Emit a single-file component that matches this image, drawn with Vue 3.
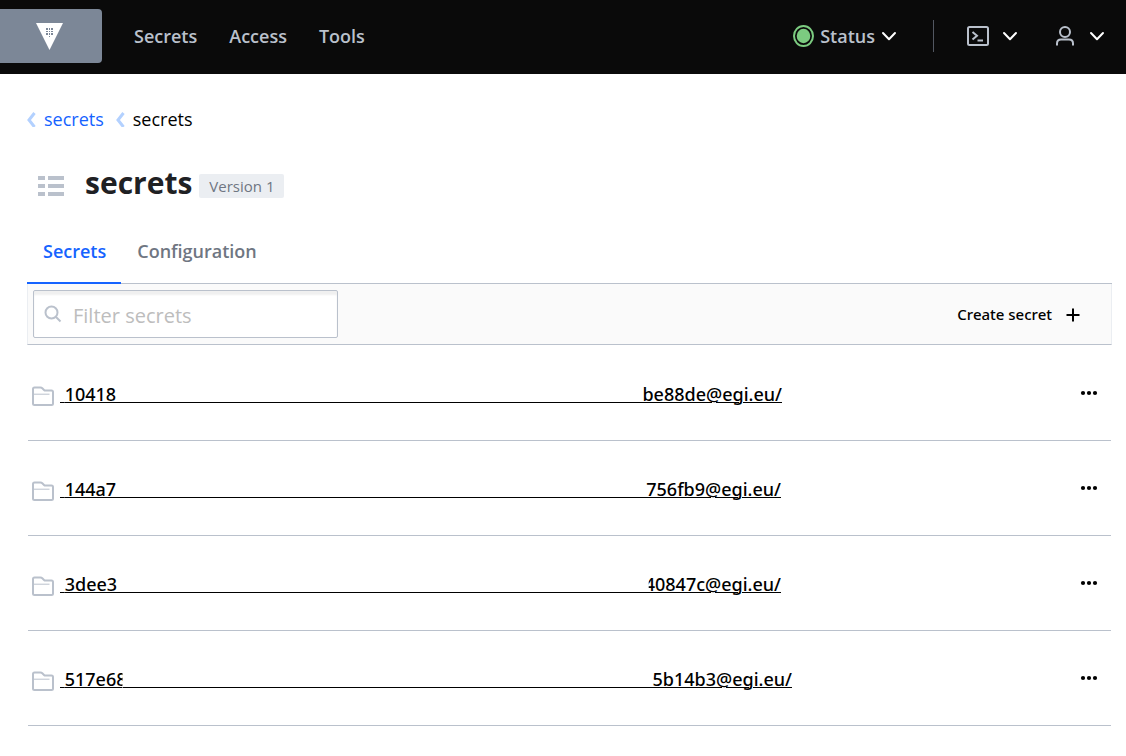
<script setup>
import { ref } from 'vue'

const filter = ref('')
const rows = [
  { start: '10418', end: 'be88de@egi.eu/', width: 722 },
  { start: '144a7', end: '756fb9@egi.eu/', width: 721 },
  { start: '3dee3', end: '40847c@egi.eu/', width: 721, cutEnd: true },
  { start: '517e68', end: '5b14b3@egi.eu/', width: 732, cutStart: true }
]
</script>

<template>
  <div class="page">
    <header class="topbar">
      <a class="brand" href="#" aria-label="Home">
        <svg width="28" height="28" viewBox="0 0 28 28">
          <path d="M0 1H27L13.5 28Z" fill="#fff" />
          <path
            fill="#7c8797"
            d="M10 6h2v2h-2zM13 6h1v2h-1zM15 6h2v2h-2zM10 9h2v1h-2zM13 9h1v1h-1zM15 9h2v1h-2zM10 11h2v2h-2zM13 11h1v2h-1zM15 11h2v2h-2zM13 14h1v1h-1z"
          />
        </svg>
      </a>
      <nav class="nav">
        <a href="#">Secrets</a>
        <a href="#">Access</a>
        <a href="#">Tools</a>
      </nav>
      <div class="tools">
        <button class="tool status">
          <svg width="22" height="24" viewBox="0 0 22 24">
            <ellipse cx="10.5" cy="12" rx="9.5" ry="10" fill="none" stroke="#7ccb80" stroke-width="2" />
            <ellipse cx="10.5" cy="12" rx="6.8" ry="7.2" fill="#7ccb80" />
          </svg>
          <span>Status</span>
          <svg class="chev" width="16" height="10" viewBox="0 0 16 10"><path d="M2 2L8 8.3L14 2" /></svg>
        </button>
        <span class="divider"></span>
        <button class="tool console" aria-label="Console">
          <svg class="line" width="24" height="22" viewBox="0 0 24 22">
            <rect x="2" y="2" width="20" height="18" rx="1.5" />
            <path d="M6.5 7L11 10.8L6.5 14.6M11.5 15.5H17" />
          </svg>
          <svg class="chev" width="16" height="10" viewBox="0 0 16 10"><path d="M2 2L8 8.3L14 2" /></svg>
        </button>
        <button class="tool user" aria-label="User">
          <svg class="line" width="20" height="22" viewBox="0 0 20 22">
            <circle cx="10" cy="7" r="5" />
            <path d="M2 20.5V18.5Q2 14.5 6 14.5H14Q18 14.5 18 18.5V20.5" />
          </svg>
          <svg class="chev" width="16" height="10" viewBox="0 0 16 10"><path d="M2 2L8 8.3L14 2" /></svg>
        </button>
      </div>
    </header>

    <main class="content">
      <nav class="crumbs" aria-label="Breadcrumb">
        <svg width="9" height="16" viewBox="0 0 9 16"><path d="M7.5 2L2 9L7.5 16" /></svg>
        <a href="#">secrets</a>
        <svg width="9" height="16" viewBox="0 0 9 16"><path d="M7.5 2L2 9L7.5 16" /></svg>
        <span>secrets</span>
      </nav>

      <div class="heading">
        <svg width="27" height="22" viewBox="0 0 27 22" fill="#bac1cc">
          <path d="M0 2h7v4H0zM10 2h16v4H10zM0 10h7v4H0zM10 10h16v4H10zM0 18h7v4H0zM10 18h16v4H10z" />
        </svg>
        <h1>secrets</h1>
        <span class="tag">Version 1</span>
      </div>

      <nav class="tabs">
        <a class="active" href="#">Secrets</a>
        <a href="#">Configuration</a>
      </nav>

      <div class="toolbar">
        <label class="search">
          <svg width="18" height="18" viewBox="0 0 18 18"><circle cx="7.5" cy="7.5" r="6" /><path d="M12 12L16.5 16.5" /></svg>
          <input v-model="filter" type="text" placeholder="Filter secrets" aria-label="Filter secrets">
        </label>
        <button class="create">
          <span>Create secret</span>
          <svg width="14" height="16" viewBox="0 0 14 16"><path d="M7 2.5V15.5M0.5 9H13.5" /></svg>
        </button>
      </div>

      <ul class="list">
        <li v-for="row in rows" :key="row.start">
          <svg class="folder" width="24" height="22" viewBox="0 0 24 22">
            <path d="M2 18.5V4Q2 2.5 3.5 2.5H9.5Q10.5 2.5 11.3 3.3L13 5Q13.6 5.6 14.5 5.6H20.5Q22 5.6 22 7.1V18.5Q22 20 20.5 20H3.5Q2 20 2 18.5Z" />
            <path class="thin" d="M2 9.2H18.5" />
          </svg>
          <a class="name" href="#" :style="{ width: row.width + 'px' }">
            <span class="start" :class="{ cutstart: row.cutStart }">{{ row.start }}</span>
            <span class="rule"></span>
            <span :class="{ cutend: row.cutEnd }">{{ row.end }}</span>
          </a>
          <button class="more" aria-label="More actions">
            <svg width="18" height="6" viewBox="0 0 18 6"><circle cx="3" cy="3" r="2.1" /><circle cx="9" cy="3" r="2.1" /><circle cx="15" cy="3" r="2.1" /></svg>
          </button>
        </li>
      </ul>
    </main>
  </div>
</template>

<style>
body {
  margin: 0;
  background: #fff;
}
</style>

<style scoped>
.page {
  font-family: "Open Sans", "Noto Sans", sans-serif;
  color: #000;
}
a {
  color: inherit;
  text-decoration: none;
}
button {
  border: 0;
  padding: 0;
  background: none;
  font: inherit;
  color: inherit;
}
svg {
  display: block;
  flex: none;
}
.topbar {
  display: flex;
  align-items: center;
  height: 74px;
  box-sizing: border-box;
  padding: 0 21px 2px 0;
  background: #0a0a0a;
  color: #bac1cc;
  font-size: 18px;
  font-weight: 600;
}
.brand {
  display: flex;
  align-items: center;
  box-sizing: border-box;
  width: 102px;
  height: 54px;
  padding-left: 36px;
  border-radius: 0 4px 4px 0;
  background: #7c8797;
}
.nav {
  display: flex;
  gap: 32px;
  margin-left: 32px;
}
.tools {
  display: flex;
  align-items: center;
  margin-left: auto;
}
.tool {
  display: flex;
  align-items: center;
}
.status {
  gap: 5px;
}
.chev {
  fill: none;
  stroke: #fff;
  stroke-width: 2;
  stroke-linecap: round;
  stroke-linejoin: round;
}
.status .chev {
  margin-left: 1px;
}
.divider {
  width: 1px;
  height: 32px;
  margin: 0 32px 0 36px;
  background: #525761;
}
.line {
  fill: none;
  stroke: #bac1cc;
  stroke-width: 2;
}
.console {
  gap: 12px;
}
.user {
  gap: 14px;
  margin-left: 37px;
}
.content {
  padding: 31px 14px 0 27px;
}
.crumbs {
  display: flex;
  align-items: center;
  height: 28px;
  font-size: 18px;
}
.crumbs svg {
  fill: none;
  stroke: #b3d1ff;
  stroke-width: 3;
  margin-right: 8px;
}
.crumbs a {
  margin-right: 12px;
  color: #1563ff;
}
.heading {
  display: flex;
  align-items: center;
  height: 44px;
  margin-top: 30px;
  padding-left: 11px;
}
h1 {
  margin: 0 7px 4px 20px;
  font-size: 30px;
  line-height: 40px;
  font-weight: 700;
  color: #1f2124;
}
.tag {
  padding: 0 10px;
  margin-top: 2px;
  border-radius: 2px;
  background: #ebeef2;
  color: #6f7682;
  font-size: 15px;
  line-height: 24px;
}
.tabs {
  display: flex;
  height: 76px;
  border-bottom: 1px solid #bac1cc;
  font-size: 18px;
  font-weight: 600;
  color: #6f7682;
}
.tabs a {
  box-sizing: border-box;
  height: 77px;
  padding: 31px 15px 0 16px;
  line-height: 26px;
}
.tabs .active {
  color: #1563ff;
  border-bottom: 2px solid #1563ff;
}
.toolbar {
  display: flex;
  align-items: center;
  justify-content: space-between;
  box-sizing: border-box;
  height: 61px;
  padding: 0 31px 0 5px;
  border: 1px solid #ebeef2;
  border-top: 0;
  border-bottom-color: #bac1cc;
  background: #fafafa;
}
.search {
  display: flex;
  align-items: center;
  box-sizing: border-box;
  width: 305px;
  height: 48px;
  padding: 0 10px;
  gap: 11px;
  border: 1px solid #bac1cc;
  border-radius: 2px;
  background: #fff;
  box-shadow: inset 0 4px 2px #f0f0f0;
}
.search svg {
  fill: none;
  stroke: #bac1cc;
  stroke-width: 2;
}
.search input {
  flex: 1;
  min-width: 0;
  padding: 2px 0 0;
  border: 0;
  outline: 0;
  background: none;
  font: inherit;
  font-size: 20px;
}
.search input::placeholder {
  color: #bdbdbd;
  opacity: 1;
}
.create {
  display: flex;
  align-items: center;
  gap: 14px;
  font-family: "Noto Sans", "Open Sans", sans-serif;
  font-size: 15px;
  font-weight: 500;
}
.create svg {
  stroke: #000;
  stroke-width: 2;
}
.list {
  margin: 1px 1px 0;
  padding: 0;
  list-style: none;
}
.list li {
  display: flex;
  align-items: center;
  height: 94px;
  padding: 0 13px 0 3px;
  border-bottom: 1px solid #bac1cc;
}
.folder {
  margin-top: 6px;
  fill: none;
  stroke: #bac1cc;
  stroke-width: 2;
}
.thin {
  stroke-width: 1;
}
.name {
  display: flex;
  margin: 2px 0 0 5px;
  font-family: "Noto Sans", "Open Sans", sans-serif;
  font-size: 18px;
  font-weight: 500;
  line-height: 24px;
}
.name span {
  text-decoration: underline;
  text-decoration-thickness: 1px;
  text-underline-offset: 1px;
}
.start::before {
  content: "\00a0";
}
.name .rule {
  flex: 1;
  height: 20px;
  margin: 0 -8px 0 -4px;
  border-bottom: 1px solid #000;
}
.cutstart {
  clip-path: inset(0 4px 0 0);
}
.cutend {
  clip-path: inset(0 0 0 4px);
}
.more {
  margin-left: auto;
}
</style>
